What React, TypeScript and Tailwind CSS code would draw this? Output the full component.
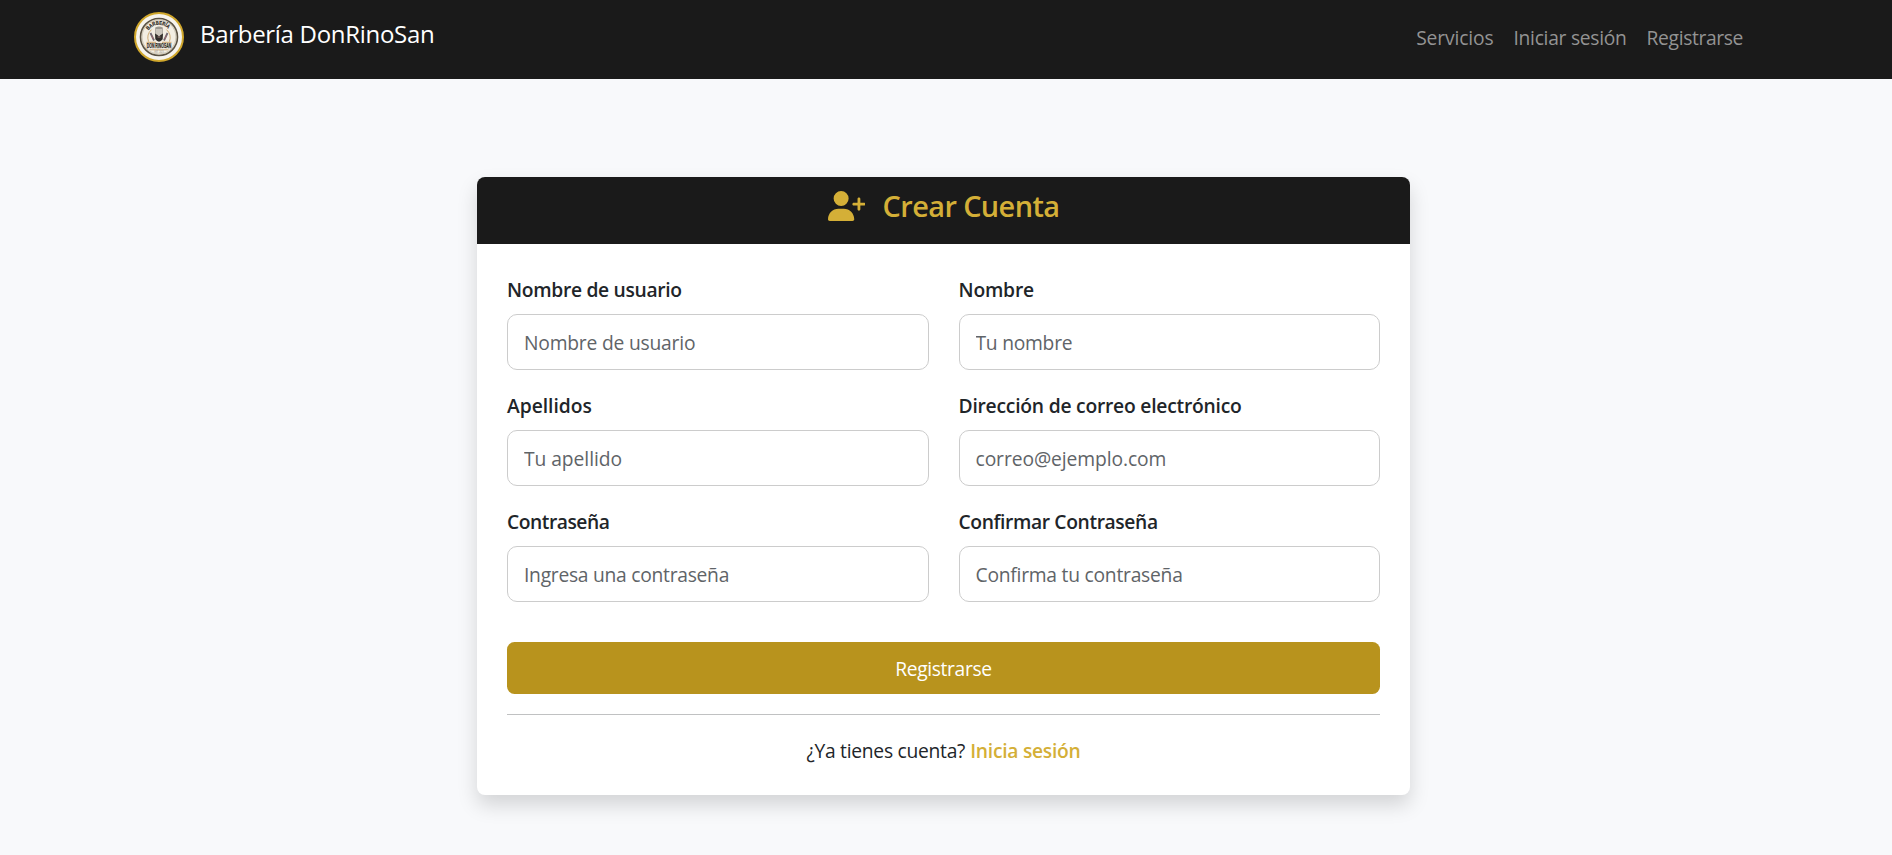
import { FaUserPlus } from "react-icons/fa6";

function Logo() {
  return (
    <svg viewBox="0 0 50 50" className="h-[50px] w-[50px] shrink-0 overflow-visible" aria-hidden="true">
      <defs>
        <path id="logo-arc" d="M12.8 22.5 A12.5 12.5 0 0 1 37.2 22.5" />
      </defs>
      <circle cx="25" cy="25" r="24" fill="#f6f3ed" stroke="#d0a72c" strokeWidth="2" />
      <circle cx="25" cy="25" r="18.5" fill="#f3eee3" stroke="#5a5142" strokeWidth="1.6" />
      <circle cx="25" cy="25" r="17" fill="none" stroke="#a39882" strokeWidth="0.5" />
      <path d="M14.5 29.5 A11.3 11.3 0 0 1 17.5 17.6 M35.5 29.5 A11.3 11.3 0 0 0 32.5 17.6" fill="none" stroke="#c9a46a" strokeWidth="0.9" />
      <text fill="#2f2a24" stroke="#2f2a24" strokeWidth="0.2" fontFamily="Liberation Sans" fontWeight="700" fontSize="5.4">
        <textPath href="#logo-arc" startOffset="4.5" textLength="22.5" lengthAdjust="spacingAndGlyphs">BARBERÍA</textPath>
      </text>
      <path d="M16.5 21 L20 28.5 M33.5 21 L30 28.5" stroke="#6d6670" strokeWidth="1.8" />
      <path d="M17.6 23.5 L19.2 27 M32.4 23.5 L30.8 27" stroke="#b76a6f" strokeWidth="0.7" />
      <path d="M21.2 15.4 Q25 13.6 28.8 15.4 L28.8 22 H21.2Z" fill="#9c9890" />
      <path d="M21.9 17 H28.1 V23 H21.9Z" fill="#cbc6bc" />
      <path d="M21 21.5 L25 24 L29 21.5 L28.7 27.3 Q25 32 21.3 27.3Z" fill="#302d2a" />
      <path d="M23.5 25 H26.5" stroke="#a6847f" strokeWidth="0.9" />
      <path d="M12.5 30.3 H22 M28 30.3 H37.5" stroke="#c29452" strokeWidth="0.8" />
      <text x="12.7" y="36.2" fill="#2f2a24" stroke="#2f2a24" strokeWidth="0.25" fontFamily="Liberation Sans" fontWeight="700" fontSize="6.4" textLength="24.6" lengthAdjust="spacingAndGlyphs">DON RINOSAN</text>
      <path d="M15.5 37.8 H34.5" stroke="#c29452" strokeWidth="0.7" />
      <text x="20.5" y="41.2" fill="#8b8375" fontFamily="Liberation Sans" fontSize="2.8" textLength="9" lengthAdjust="spacingAndGlyphs">EST. 2023</text>
    </svg>
  );
}

type FieldProps = {
  id: string;
  label: string;
  placeholder: string;
  type?: string;
  labelClass: string;
  inputClass: string;
};

const fields: FieldProps[] = [
  { id: "username", label: "Nombre de usuario", placeholder: "Nombre de usuario", labelClass: "tracking-[-0.31px]", inputClass: "tracking-[-0.2px]" },
  { id: "name", label: "Nombre", placeholder: "Tu nombre", labelClass: "tracking-[-0.2px]", inputClass: "tracking-[-0.25px]" },
  { id: "surname", label: "Apellidos", placeholder: "Tu apellido", labelClass: "tracking-[-0.03px]", inputClass: "tracking-[-0.06px]" },
  { id: "email", label: "Dirección de correo electrónico", placeholder: "correo@ejemplo.com", type: "email", labelClass: "tracking-[-0.22px]", inputClass: "tracking-[-0.09px]" },
  { id: "password", label: "Contraseña", placeholder: "Ingresa una contraseña", type: "password", labelClass: "tracking-[-0.47px]", inputClass: "tracking-[-0.27px]" },
  { id: "confirm", label: "Confirmar Contraseña", placeholder: "Confirma tu contraseña", type: "password", labelClass: "tracking-[-0.38px]", inputClass: "tracking-[-0.24px]" },
];

function Field({ id, label, placeholder, type = "text", labelClass, inputClass }: FieldProps) {
  return (
    <div className="flex flex-col">
      <label htmlFor={id} className={`mb-[9px] pt-px font-semibold leading-[30px] ${labelClass}`}>
        {label}
      </label>
      <input
        id={id}
        type={type}
        placeholder={placeholder}
        className={`h-14 w-full rounded-[10px] border border-[#cccccc] bg-white px-4 outline-none placeholder:text-[#5f6468] ${inputClass}`}
      />
    </div>
  );
}

export default function App() {
  return (
    <div className="min-h-[855px] bg-[#f8f9fb] font-['Open_Sans','Noto_Sans',sans-serif] text-[19.25px] text-[#212529]">
      <nav className="flex h-[79px] items-start justify-between bg-[#1a1a1a] pl-[134px] pr-[149px] pt-3">
        <a href="#" className="flex items-start gap-4">
          <Logo />
          <span className="pt-[3px] text-2xl leading-[38px] tracking-[-0.3px] text-white">Barbería DonRinoSan</span>
        </a>
        <div className="flex gap-5 pt-[11px] leading-[30px] text-[#939393]">
          <a href="#" className="tracking-[-0.14px]">Servicios</a>
          <a href="#" className="tracking-[-0.28px]">Iniciar sesión</a>
          <a href="#" className="tracking-[-0.37px]">Registrarse</a>
        </div>
      </nav>

      <main className="pl-[477px] pt-[98px]">
        <section className="w-[933px] overflow-hidden rounded-lg bg-white shadow-[0_10px_20px_rgba(0,0,0,0.15)]">
          <header className="flex h-[67px] items-start justify-center bg-[#1a1a1a] pt-2.5 text-[#d4af37]">
            <FaUserPlus className="mr-[17.5px] mt-1 h-[30px] w-[37.5px]" />
            <h1 className="text-[28.9px] font-semibold leading-[38px] tracking-[-0.6px]">Crear Cuenta</h1>
          </header>

          <form className="p-[30px]" onSubmit={(e) => e.preventDefault()}>
            <div className="grid grid-cols-2 gap-x-[30px] gap-y-5">
              {fields.map((f) => (
                <Field key={f.id} {...f} />
              ))}
            </div>
            <button type="submit" className="mt-10 h-[52px] w-full rounded-[7.5px] bg-[#b8931d] pt-0.5 tracking-[-0.37px] text-white">
              Registrarse
            </button>
            <hr className="mb-[21px] mt-5 border-t border-[#c0c1c2]" />
            <p className="-mb-px text-center leading-[30px]">
              <span className="tracking-[-0.27px]">¿Ya tienes cuenta?</span>{" "}
              <a href="#" className="font-semibold tracking-[-0.26px] text-[#d4af37]">Inicia sesión</a>
            </p>
          </form>
        </section>
      </main>
    </div>
  );
}
